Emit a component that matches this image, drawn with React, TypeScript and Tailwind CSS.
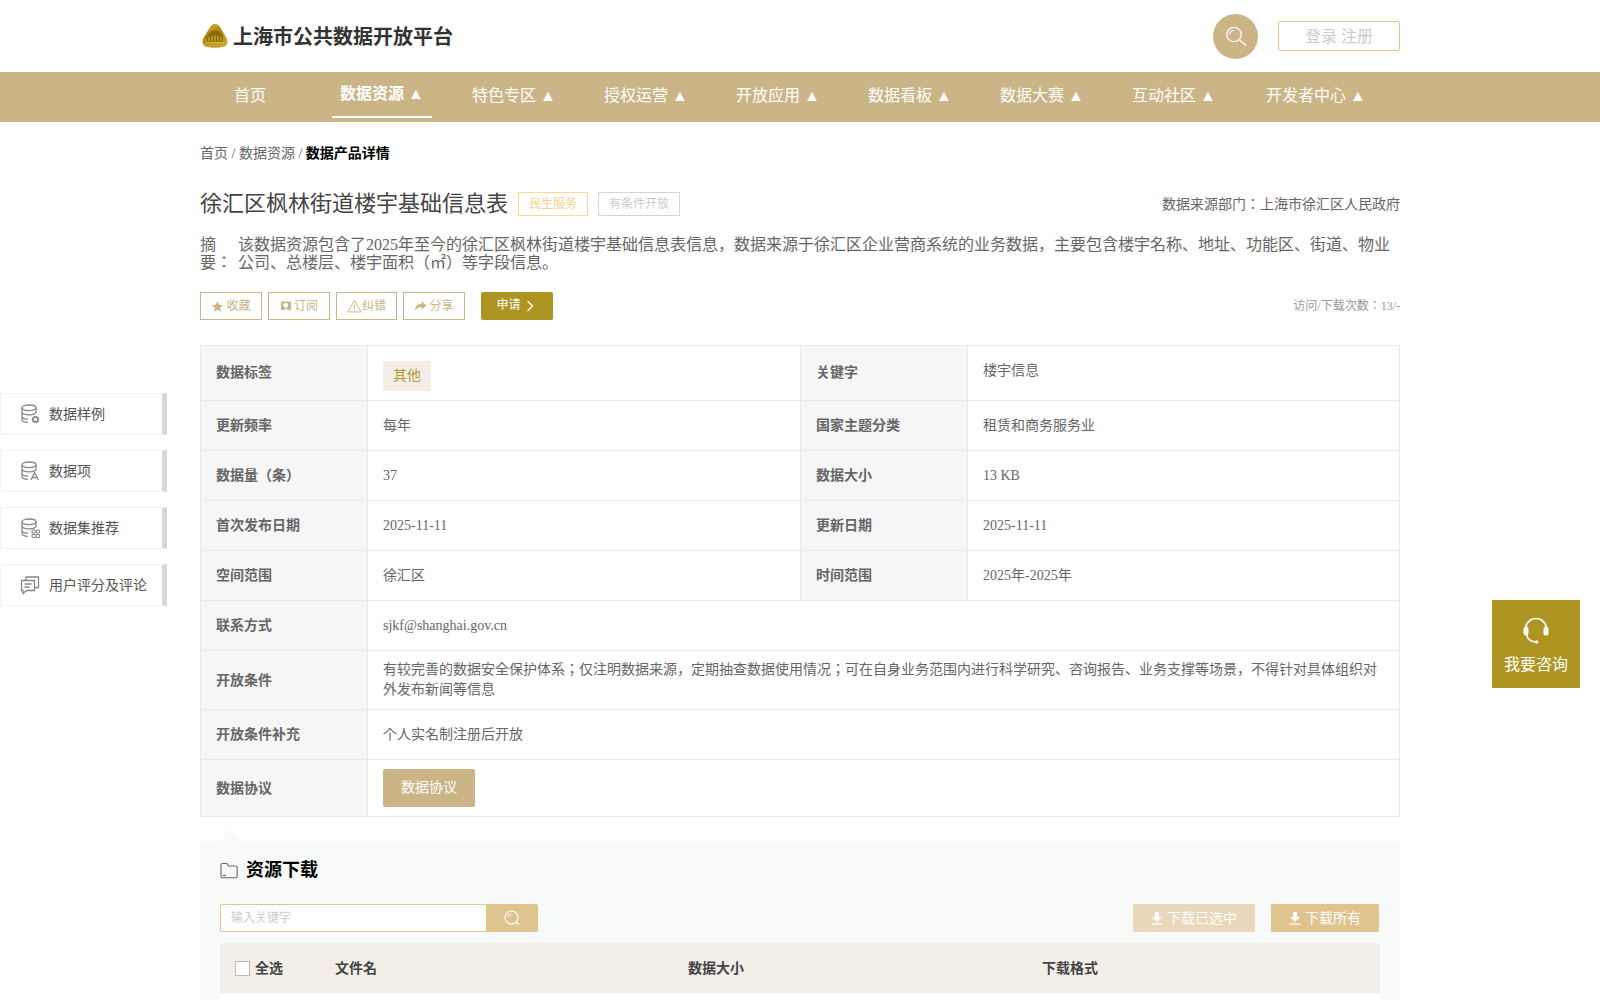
import React from "react";

const navItems = ["首页", "数据资源 ▲", "特色专区 ▲", "授权运营 ▲", "开放应用 ▲", "数据看板 ▲", "数据大赛 ▲", "互动社区 ▲", "开发者中心 ▲"];

function Logo() {
  return (
    <svg width="28" height="26" viewBox="0 0 28 26" className="shrink-0">
      <defs>
        <linearGradient id="lg" x1="0" y1="0" x2="0.4" y2="1">
          <stop offset="0" stopColor="#d9b93a" />
          <stop offset="0.5" stopColor="#a9860f" />
          <stop offset="1" stopColor="#c9a332" />
        </linearGradient>
      </defs>
      <path d="M14 1c2.800 0 4.200 1.600 5.400 3.800l5.600 9.400c2 3.400 2 6.800-.6 8.800C21 25.400 7 25.400 3.600 23 1 21 1 17.600 3 14.200L8.600 4.800C9.800 2.600 11.200 1 14 1z" fill="url(#lg)" />
      <path d="M6 15a8 7.500 0 0 1 16 0v4H6z" fill="#8c6c0a" />
      <path d="M8 18.500V14M11 18.500V13M14 18.500V12.500M17 18.500V13M20 18.500V14" stroke="#d9b93a" strokeWidth="1" />
      <path d="M5 19.500h18" stroke="#d9b93a" strokeWidth="1" />
    </svg>
  );
}

function IconStar() {
  return (
    <svg width="13" height="13" viewBox="0 0 24 24" fill="#cbb486"><path d="M12 2l3.100 6.600 7.200.9-5.300 5 1.400 7.200L12 18.100l-6.400 3.600L7 14.500l-5.300-5 7.200-.9z" /></svg>
  );
}
function IconSub() {
  return (
    <svg width="12" height="12" viewBox="0 0 24 24" fill="#cbb486"><path fillRule="evenodd" d="M2 3h20v17h-6l-4-3-4 3H2zM9 7a3 3 0 0 0 0 6 3 3 0 0 0 6 0 3 3 0 0 0-6-6z" /></svg>
  );
}
function IconWarn() {
  return (
    <svg width="15" height="14" viewBox="0 0 24 22" fill="none" stroke="#cbb486" strokeWidth="1.600"><path d="M12 2L1.500 20.500h21zM12 8.500v6.500M12 16.500v1.800" /></svg>
  );
}
function IconShare() {
  return (
    <svg width="13" height="12" viewBox="0 0 24 22" fill="#cbb486"><path d="M14 2l9 8-9 8v-5C8 13 5 15 2 20c0-7 4-13 12-13z" /></svg>
  );
}
function IconDownload() {
  return (
    <svg width="12" height="13" viewBox="0 0 12 13" fill="#fff" className="mr-1"><path d="M4 0h4v5h3L6 10 1 5h3z" /><rect x="0.500" y="11.500" width="11" height="1.200" /></svg>
  );
}
function DbBase({ children }: { children?: React.ReactNode }) {
  return (
    <svg width="20" height="20" viewBox="0 0 20 20" fill="none" stroke="#888" strokeWidth="1.300">
      <ellipse cx="9" cy="3.800" rx="7" ry="2.800" />
      <path d="M2 3.800v11.700c0 1.600 2.500 2.800 6 2.800M16 3.800v5.200M2 8c0 1.600 3 2.800 7 2.800s7-1.200 7-2.800M2 12.500c0 1.500 2.500 2.600 6 2.700" />
      {children}
    </svg>
  );
}
const sideItems: { t: string; i: React.ReactNode }[] = [
  { t: "数据样例", i: <DbBase><circle cx="15.500" cy="15.500" r="2.700" strokeWidth="1.800" /></DbBase> },
  { t: "数据项", i: <DbBase><path d="M11 19l3.500-7.500L18.500 19M12.300 16.500h5" strokeWidth="1.300" /></DbBase> },
  { t: "数据集推荐", i: <DbBase><path d="M12 12h3v3h-3zM16.500 12h3v3h-3zM12 16.500h3v3h-3zM16.500 16.500h3v3h-3z" strokeWidth="1" /></DbBase> },
  {
    t: "用户评分及评论",
    i: (
      <svg width="20" height="20" viewBox="0 0 20 20" fill="none" stroke="#888" strokeWidth="1.300">
        <path d="M6 5V2h12.500v10.500H15" />
        <path d="M1.500 5.500h13v10h-8l-3.500 3v-3H1.500z" />
        <path d="M4.500 9h7M4.500 12h5" />
      </svg>
    ),
  },
];

const th = "bg-[#f6f6f6] border border-[#e9e9e9] pl-[15px] text-left font-bold text-[14px] text-[#666]";
const td = "border border-[#e9e9e9] px-[15px] font-normal text-[14px] text-[#666]";

export default function App() {
  return (
    <div className="relative h-screen overflow-hidden bg-white font-['Liberation_Serif','Noto_Sans_CJK_JP',serif] text-[#666]">
      {/* header */}
      <header className="h-[72px]">
        <div className="mx-auto flex h-full w-[1200px] items-center justify-between">
          <div className="flex items-center gap-[4px] pl-[1px]">
            <Logo />
            <span className="pt-[2px] text-[20px] font-bold text-[#333]">上海市公共数据开放平台</span>
          </div>
          <div className="flex items-center gap-[20px]">
            <div className="flex h-[45px] w-[45px] items-center justify-center rounded-full bg-[#cbb486]">
              <svg width="22" height="22" viewBox="0 0 22 22" fill="none" stroke="#fff" strokeWidth="1.300">
                <circle cx="9" cy="9.500" r="7.200" />
                <path d="M4.800 9.500a4.200 4.200 0 0 1 4.200-4.200M14.500 15l6.500 5.500" />
              </svg>
            </div>
            <div className="flex h-[30px] w-[122px] items-center justify-center rounded-[2px] border border-[#e0c48f] pt-[2px] text-[16px] text-[#ccc]">
              登录 注册
            </div>
          </div>
        </div>
      </header>

      {/* nav */}
      <nav className="h-[50px] bg-[#cbb486]">
        <div className="mx-auto flex h-full w-[1200px] gap-[32px]">
          {navItems.map((n, i) => (
            <div
              key={n}
              className={
                i === 1
                  ? "flex h-[46px] w-[100px] shrink-0 items-center justify-center whitespace-nowrap border-b-2 border-white text-[16px] font-bold text-white"
                  : i === 8
                    ? "flex h-[46px] w-[120px] shrink-0 items-center justify-center whitespace-nowrap pt-[2px] text-[16px] text-white"
                    : "flex h-[46px] w-[100px] shrink-0 items-center justify-center whitespace-nowrap pt-[2px] text-[16px] text-white"
              }
            >
              {n}
            </div>
          ))}
        </div>
      </nav>

      <main className="mx-auto w-[1200px]">
        {/* breadcrumb */}
        <div className="pt-[23px] text-[14px] leading-[18px] text-[#666]">
          首页 / 数据资源 / <span className="font-bold text-black">数据产品详情</span>
        </div>

        {/* title */}
        <div className="mt-[26px] flex items-center justify-between">
          <div className="flex items-center">
            <h1 className="text-[22px] font-normal leading-[30px] text-[#444]">徐汇区枫林街道楼宇基础信息表</h1>
            <span className="ml-[10px] flex h-[24px] w-[70px] items-center justify-center border border-[#ffd591] text-[12px] text-[#f7cf8f]">民生服务</span>
            <span className="ml-[10px] flex h-[24px] w-[82px] items-center justify-center border border-[#d4d4d4] text-[12px] text-[#ccc]">有条件开放</span>
          </div>
          <div className="text-[14px] text-[#666]">数据来源部门：上海市徐汇区人民政府</div>
        </div>

        {/* abstract */}
        <div className="mt-[17px] flex text-[16px] leading-[18px] text-[#666]">
          <div className="w-[38px] shrink-0">摘<br />要：</div>
          <div className="pr-[8px]">该数据资源包含了2025年至今的徐汇区枫林街道楼宇基础信息表信息，数据来源于徐汇区企业营商系统的业务数据，主要包含楼宇名称、地址、功能区、街道、物业公司、总楼层、楼宇面积（㎡）等字段信息。</div>
        </div>

        {/* actions */}
        <div className="mt-[20px] flex h-[28px] items-center">
          <div className="flex h-full w-[62px] items-center justify-center gap-[2px] border border-[#cbb486] text-[12px] text-[#cbb486]"><IconStar />收藏</div>
          <div className="ml-[6px] flex h-full w-[62px] items-center justify-center gap-[2px] border border-[#cbb486] text-[12px] text-[#cbb486]"><IconSub />订阅</div>
          <div className="ml-[6px] flex h-full w-[61px] items-center justify-center border border-[#cbb486] text-[12px] text-[#cbb486]"><IconWarn />纠错</div>
          <div className="ml-[6px] flex h-full w-[62px] items-center justify-center gap-[2px] border border-[#cbb486] text-[12px] text-[#cbb486]"><IconShare />分享</div>
          <div className="ml-[16px] flex h-full w-[72px] items-center justify-center gap-[5px] rounded-[2px] bg-[#ae9522] pb-[2px] pr-[4px] text-[12px] text-white">
            申请
            <svg width="8" height="12" viewBox="0 0 8 12" fill="none" stroke="#fff" strokeWidth="1.300" className="mt-[2px]"><path d="M1.500 1l5 5-5 5" /></svg>
          </div>
          <div className="ml-auto text-[12px] text-[#999]">访问/下载次数：13/-</div>
        </div>

        {/* info table */}
        <table className="mt-[25px] w-[1199px] table-fixed border-collapse">
          <colgroup>
            <col className="w-[167px]" />
            <col className="w-[433px]" />
            <col className="w-[167px]" />
            <col className="w-[432px]" />
          </colgroup>
          <tbody>
            <tr className="h-[55px]">
              <th className={th}><div className="pb-[1px]">数据标签</div></th>
              <td className={td}>
                <span className="mt-[5px] inline-block h-[30px] w-[48px] rounded-[2px] bg-[#f3efe8] text-center leading-[30px] text-[#b8982d]">其他</span>
              </td>
              <th className={th}><div className="pb-[1px]">关键字</div></th>
              <td className={td}><div className="pb-[5px]">楼宇信息</div></td>
            </tr>
            <tr className="h-[50px]">
              <th className={th}>更新频率</th><td className={td}>每年</td>
              <th className={th}>国家主题分类</th><td className={td}>租赁和商务服务业</td>
            </tr>
            <tr className="h-[50px]">
              <th className={th}>数据量（条）</th><td className={td}>37</td>
              <th className={th}>数据大小</th><td className={td}>13 KB</td>
            </tr>
            <tr className="h-[50px]">
              <th className={th}>首次发布日期</th><td className={td}>2025-11-11</td>
              <th className={th}>更新日期</th><td className={td}>2025-11-11</td>
            </tr>
            <tr className="h-[50px]">
              <th className={th}>空间范围</th><td className={td}>徐汇区</td>
              <th className={th}>时间范围</th><td className={td}>2025年-2025年</td>
            </tr>
            <tr className="h-[50px]">
              <th className={th}>联系方式</th><td className={td} colSpan={3}>sjkf@shanghai.gov.cn</td>
            </tr>
            <tr className="h-[59px]">
              <th className={th}>开放条件</th>
              <td className={td + " leading-[20px]"} colSpan={3}>有较完善的数据安全保护体系；仅注明数据来源，定期抽查数据使用情况；可在自身业务范围内进行科学研究、咨询报告、业务支撑等场景，不得针对具体组织对外发布新闻等信息</td>
            </tr>
            <tr className="h-[50px]">
              <th className={th}>开放条件补充</th><td className={td} colSpan={3}>个人实名制注册后开放</td>
            </tr>
            <tr className="h-[57px]">
              <th className={th}>数据协议</th>
              <td className={td} colSpan={3}>
                <span className="inline-block h-[38px] w-[92px] rounded-[2px] bg-[#cbb486] text-center leading-[38px] text-white">数据协议</span>
              </td>
            </tr>
          </tbody>
        </table>

        {/* resource panel */}
        <section className="relative mt-[24px] h-[300px] bg-[#f8faf9] px-[20px]">
          <div className="absolute left-[20px] top-[-12px] h-0 w-0 border-x-[10px] border-b-[12px] border-x-transparent border-b-[#f8faf9]" />
          <div className="flex items-center gap-[8px] pt-[17px]">
            <svg width="18" height="17" viewBox="0 0 18 17" fill="none" stroke="#666" strokeWidth="1.100">
              <path d="M1 14.500V3c0-1 .6-1.500 1.500-1.500h4.300L8.500 4h7.500c.7 0 1.200.5 1.200 1.200v9.300c0 .7-.5 1.200-1.200 1.200H2.200c-.7 0-1.200-.5-1.200-1.200z" />
              <path d="M3 13.500h3" />
            </svg>
            <h2 className="text-[18px] font-bold leading-[24px] text-black">资源下载</h2>
          </div>

          <div className="mt-[22px] flex h-[28px] items-center">
            <div className="flex h-full w-[266px] items-center rounded-l-[2px] border border-r-0 border-[#dfc490] bg-white pl-[10px] text-[12px] text-[#ccc]">输入关键字</div>
            <div className="flex h-full w-[52px] items-center justify-center rounded-r-[2px] bg-[#dfc490]">
              <svg width="16" height="16" viewBox="0 0 16 16" fill="none" stroke="#fff" strokeWidth="1.200">
                <circle cx="7.500" cy="7.500" r="6.500" />
                <path d="M4 6.500a3.500 3.500 0 0 1 3-2.500M12.500 12.500l2.500 2.500" />
              </svg>
            </div>
            <div className="ml-auto flex h-full w-[122px] items-center justify-center rounded-[1px] bg-[#e9d8ba] text-[14px] text-white"><IconDownload />下载已选中</div>
            <div className="ml-[16px] mr-[1px] flex h-full w-[108px] items-center justify-center rounded-[1px] bg-[#dfc490] text-[14px] text-white"><IconDownload />下载所有</div>
          </div>

          <div className="mt-[11px] flex h-[50px] items-center bg-[#f3efe8] text-[14px] font-bold text-[#444]">
            <div className="ml-[15px] h-[15px] w-[15px] border border-[#bbb] bg-white" />
            <div className="ml-[5px] w-[80px]">全选</div>
            <div className="w-[353px]">文件名</div>
            <div className="w-[354px]">数据大小</div>
            <div>下载格式</div>
          </div>
          <div className="h-[60px] bg-white" />
        </section>
      </main>

      {/* floating side nav */}
      <div className="absolute left-0 top-[393px] flex w-[167px] flex-col gap-[15px]">
        {sideItems.map((s) => (
          <div key={s.t} className="flex h-[42px] items-center border border-[#f3f3f3] border-r-[5px] border-r-[#d6d6d6] bg-white pl-[19px] text-[14px] text-[#555]">
            {s.i}
            <span className="ml-[9px] whitespace-nowrap">{s.t}</span>
          </div>
        ))}
      </div>

      {/* consult */}
      <div className="absolute left-[1492px] top-[600px] flex h-[88px] w-[88px] flex-col items-center bg-[#ae9522] pt-[17px] text-white">
        <svg width="28" height="28" viewBox="0 0 28 28" fill="none">
          <path d="M3.500 14V12a10.500 10.500 0 0 1 21 0v2" stroke="#fff" strokeWidth="1.600" />
          <rect x="1.500" y="9.500" width="5" height="9" rx="2.500" fill="#fff" />
          <rect x="21.500" y="9.500" width="5" height="9" rx="2.500" fill="#fff" />
          <path d="M4.500 18c1 4 3.500 6.500 9 7" stroke="#fff" strokeWidth="1.500" />
          <circle cx="14.500" cy="25" r="1.800" fill="#fff" />
        </svg>
        <div className="mt-[10px] text-[16px] leading-[20px]">我要咨询</div>
      </div>
    </div>
  );
}
